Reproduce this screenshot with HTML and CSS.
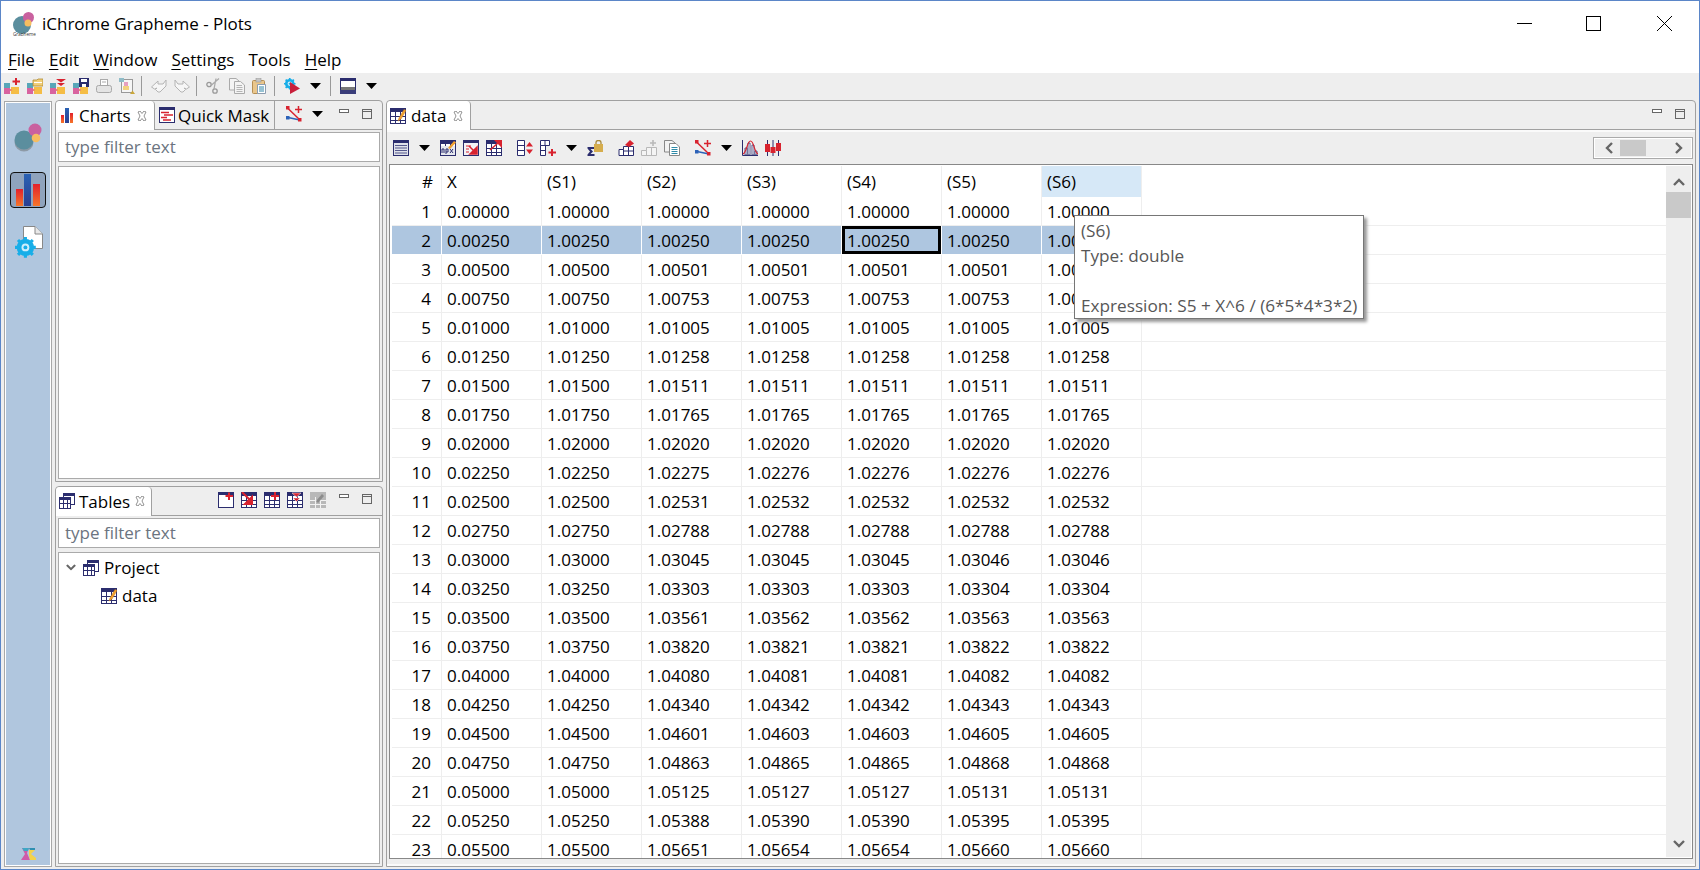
FILE: index.html
```html
<!DOCTYPE html>
<html lang="en">
<head>
    <meta charset="UTF-8">
    <title>iChrome Grapheme - Plots</title>
    <link rel="stylesheet" href="styles.css">
</head>
<body>
    <!-- shared icon sprites -->
    <svg class="sprites" xmlns="http://www.w3.org/2000/svg">
        <defs>
            <linearGradient id="barRed" x1="0" y1="0" x2="0" y2="1"><stop offset="0" stop-color="#e3202c"/><stop offset="1" stop-color="#f6762a"/></linearGradient>
            <linearGradient id="barBlue" x1="0" y1="0" x2="0" y2="1"><stop offset="0" stop-color="#2a62b4"/><stop offset="1" stop-color="#2b3f92"/></linearGradient>
            <g id="blocks">
                <rect x="0" y="5" width="6" height="5" fill="#58a6b8"/>
                <rect x="0" y="10" width="6" height="6" fill="#d8639f"/>
                <rect x="7" y="9" width="8" height="7" fill="#f5bd45"/>
                <rect x="6" y="11" width="2" height="2" fill="#ee8f6a"/>
            </g>
            <g id="gridBase">
                <rect x=".5" y=".5" width="15" height="15" fill="#fff" stroke="#2b2d6e"/>
                <rect x="0" y="0" width="16" height="4" fill="#2b2d6e"/>
                <path d="M0 8.5H16M0 12.5H16M5.5 4V16M10.5 4V16" stroke="#2b2d6e" fill="none"/>
            </g>
            <g id="gear">
                <circle cx="8" cy="8" r="5.2" fill="none" stroke="#18aee8" stroke-width="3"/>
                <path d="M8 0V16M0 8H16M2.3 2.3L13.7 13.7M13.7 2.3L2.3 13.7" stroke="#18aee8" stroke-width="2.4"/>
                <circle cx="8" cy="8" r="4.6" fill="#18aee8"/>
                <circle cx="8" cy="8" r="3" fill="#cfeefb"/>
                <circle cx="8" cy="8" r="1.5" fill="#18aee8"/>
            </g>
            <symbol id="i-new" viewBox="0 0 16 16"><use href="#blocks"/><path d="M12 0V7M8.500 3.500H16" stroke="#d8232f" stroke-width="2"/></symbol>
            <symbol id="i-open" viewBox="0 0 16 16"><use href="#blocks"/><path d="M6 2H10L11 1H16V8H6Z" fill="#f1cf79" stroke="#b08a32" stroke-width=".8"/><rect x="7" y="4" width="8" height="1" fill="#fff"/></symbol>
            <symbol id="i-merge" viewBox="0 0 16 16"><use href="#blocks"/><path d="M6 1H16L11 4.500ZM7 5H15L11 8Z" fill="#d8232f"/></symbol>
            <symbol id="i-save" viewBox="0 0 16 16"><use href="#blocks"/><rect x="6" y="0" width="10" height="9" fill="#2b2d6e"/><rect x="8" y="1" width="6" height="3" fill="#fff"/><rect x="9" y="6" width="4" height="3" fill="#fff"/></symbol>
            <symbol id="i-print" viewBox="0 0 16 16"><rect x="4.500" y="1.500" width="7" height="6" fill="#fff" stroke="#aaa"/><path d="M6 4H10" stroke="#aaa"/><rect x=".5" y="7.500" width="15" height="7" rx="2" fill="#e4e4e4" stroke="#a8a8a8"/></symbol>
            <symbol id="i-preview" viewBox="0 0 16 16"><rect x="2.500" y="1.500" width="11" height="13" fill="#f6f6f6" stroke="#999"/><rect x="0" y="0" width="5" height="4" fill="#8fbcc8"/><rect x="5" y="4" width="4" height="4" fill="#e6a0c0"/><rect x="4" y="8" width="6" height="4" fill="#f2d27e"/><path d="M11 16L13.500 12.500L16 16Z" fill="#c9a63a"/></symbol>
            <symbol id="i-undo" viewBox="0 0 16 16"><path d="M.5 9L7 3V6H12L15 2V8L9 14H7L4.500 11.500L6 10L3.500 11Z" fill="#f6f6f6" stroke="#b4b4b4"/></symbol>
            <symbol id="i-redo" viewBox="0 0 16 16"><path d="M15.500 9L9 3V6H4L1 2V8L7 14H9L11.500 11.500L10 10L12.500 11Z" fill="#f6f6f6" stroke="#b4b4b4"/></symbol>
            <symbol id="i-cut" viewBox="0 0 16 16"><circle cx="3" cy="6.500" r="2.200" fill="none" stroke="#999" stroke-width="1.300"/><circle cx="9" cy="13" r="2.200" fill="none" stroke="#999" stroke-width="1.300"/><path d="M13 .5L5 7.500M10 .5L8 11" stroke="#aaa" stroke-width="1.300"/></symbol>
            <symbol id="i-copy" viewBox="0 0 16 16"><path d="M.5.5H7L10 3V12H.5Z" fill="#f4f4f4" stroke="#aaa"/><path d="M5.500 3.500H11.500L15.500 7V15.500H5.500Z" fill="#f4f4f4" stroke="#aaa"/><path d="M7.500 7.500H13M7.500 9.500H13.500M7.500 11.500H13.500M7.500 13.500H13.500" stroke="#b5b5b5"/></symbol>
            <symbol id="i-paste" viewBox="0 0 16 16"><rect x=".5" y="2.500" width="12" height="13" rx="1" fill="#e9c68c" stroke="#b58f55"/><rect x="4" y="0" width="5" height="4" fill="#c4c4c4" stroke="#999" stroke-width=".6"/><path d="M5.500 6.500H13.500V15.500H5.500Z" fill="#fff" stroke="#8d9db0"/><path d="M7 9H12M7 11H12M7 13H12" stroke="#2e86a8"/></symbol>
            <symbol id="i-run" viewBox="0 0 16 16"><g transform="scale(.72)"><use href="#gear"/></g><path d="M6 4L16 10.500L6 16Z" fill="#c81f3a"/></symbol>
            <symbol id="i-layout" viewBox="0 0 16 16"><rect x=".5" y=".5" width="15" height="15" fill="#fff" stroke="#2b2d6e"/><rect x="0" y="0" width="16" height="3" fill="#2b2d6e"/><rect x="1" y="9" width="14" height="3" fill="#777"/><rect x="0" y="12" width="16" height="4" fill="#3a3d7a"/></symbol>
            <symbol id="i-net" viewBox="0 0 16 16"><path d="M1.500 2L14 14" stroke="#d8232f" stroke-width="1.500"/><path d="M2 11.500L14 14" stroke="#2c62b8" stroke-width="1.500"/><rect x="0" y="0" width="3.500" height="3.500" fill="#d8232f"/><rect x="0" y="10" width="3.500" height="3.500" fill="#2c62b8"/><rect x="12" y="12" width="3.500" height="3.500" fill="#d8232f"/><path d="M12.500 0V7M9 3.500H16" stroke="#d8232f" stroke-width="1.500"/></symbol>
            <symbol id="i-chart" viewBox="0 0 12 16"><rect x="0" y="7" width="3" height="8" fill="url(#barRed)"/><rect x="4" y="0" width="4" height="15" fill="url(#barBlue)"/><rect x="9" y="5" width="3" height="10" fill="url(#barRed)"/></symbol>
            <symbol id="i-mask" viewBox="0 0 16 16"><rect x=".5" y=".5" width="15" height="15" fill="#fff" stroke="#2b2d6e"/><rect x="0" y="0" width="16" height="3" fill="#2b2d6e"/><path d="M2 5.500H10M5 8H14M2 10.500H8M4 13H12" stroke="#d8232f" stroke-width="1.600"/></symbol>
            <symbol id="i-data" viewBox="0 0 16 16"><use href="#gridBase"/><path d="M8 13L9 10L14 1.500L16 2.500L11 11Z" fill="#f2a12f" stroke="#c77a16" stroke-width=".5"/></symbol>
            <symbol id="i-project" viewBox="0 0 16 16"><rect x="4.500" y=".5" width="11" height="11" fill="#fff" stroke="#2b2d6e"/><rect x="4" y="0" width="12" height="3" fill="#2b2d6e"/><rect x=".5" y="4.500" width="11" height="11" fill="#fff" stroke="#2b2d6e"/><rect x="0" y="4" width="12" height="3" fill="#2b2d6e"/><path d="M0 10.500H12M4.500 7V16M8.500 7V16" stroke="#2b2d6e"/></symbol>
            <symbol id="i-view" viewBox="0 0 16 16"><rect x=".5" y=".5" width="15" height="15" fill="#dfe1ea" stroke="#2b2d6e"/><rect x="0" y="0" width="16" height="3" fill="#2b2d6e"/><path d="M2 5.500H14M2 8H14M2 10.500H14M2 13H14" stroke="#55588c" stroke-width="1.200"/></symbol>
            <symbol id="i-expr" viewBox="0 0 16 16"><use href="#gridBase"/><rect x="1" y="6" width="14" height="9" fill="#e6e8ee"/><path d="M2 13V9H4V13M6 9V14M6 9H8V12H6M10 9L13 13M13 9L10 13" stroke="#2b2d6e" fill="none"/><path d="M8 8L14 1L16 2.500L10 9Z" fill="#f2a12f"/></symbol>
            <symbol id="i-import" viewBox="0 0 16 16"><rect x=".5" y=".5" width="15" height="15" fill="#f2f2f6" stroke="#2b2d6e"/><rect x="0" y="0" width="16" height="3" fill="#2b2d6e"/><path d="M3 6H8M3 9H6M3 12H6" stroke="#d8232f"/><path d="M6 6L13 13M14 7V14H7Z" fill="#d8232f" stroke="#d8232f" stroke-width="1.500"/></symbol>
            <symbol id="i-export" viewBox="0 0 16 16"><use href="#gridBase"/><path d="M4 10L12 3M9 0H16V7Z" fill="#d8232f" stroke="#d8232f" stroke-width="1.500"/></symbol>
            <symbol id="i-sort" viewBox="0 0 16 16"><path d="M.5.5H7.500V15.500H.5ZM.5 5.500H7.500M.5 10.500H7.500" fill="#fff" stroke="#2b2d6e"/><path d="M9 6.500L12.500 2L16 6.500ZM9 9.500L12.500 14L16 9.500Z" fill="#d8232f"/></symbol>
            <symbol id="i-addcol" viewBox="0 0 16 16"><path d="M.5.5H9.500V5.500H.5ZM.5 5.500H5.500V15.500H.5ZM.5 10.500H5.500M5 .5V5" fill="#fff" stroke="#2b2d6e"/><path d="M12 9V16M8.500 12.500H16" stroke="#d8232f" stroke-width="2"/></symbol>
            <symbol id="i-sum" viewBox="0 0 16 16"><path d="M.5 7H7.500V9H3.500L6 11.500L3.500 14H7.500V16H.5V14.500L3 11.500L.5 8.500Z" fill="#2b2d6e"/><rect x="7" y="4" width="9" height="8" fill="#d6ad4d"/><path d="M9 4V2.500A2.500 2 0 0 1 14 2.500V4" fill="none" stroke="#a98a3a" stroke-width="1.300"/></symbol>
            <symbol id="i-edittable" viewBox="0 0 16 16"><path d="M1 15.500V9.500H5.500V6.500H15.500V15.500ZM5.500 9.500V15.500M10.500 6.500V15.500M5.500 11H15.500" fill="#fff" stroke="#2b2d6e"/><path d="M7 5L12 0L16 3.500L11 7Z" fill="#d8232f"/></symbol>
            <symbol id="i-addtable" viewBox="0 0 16 16"><path d="M.5 15.500V10.500H5.500V7.500H15.500V15.500ZM5.500 10.500V15.500M10.500 7.500V15.500" fill="#f4f4f4" stroke="#b8b8b8"/><path d="M12 0V6M9 3H15" stroke="#b8b8b8" stroke-width="1.600"/></symbol>
            <symbol id="i-clip" viewBox="0 0 16 16"><path d="M.5.5H8L11 3V12H.5Z" fill="#f2f2f2" stroke="#888"/><path d="M5.500 3.500H12L15.500 7V15.500H5.500Z" fill="#fff" stroke="#888"/><path d="M7.500 7.500H13.500M7.500 9.500H13.500M7.500 11.500H13.500M7.500 13.500H13.500" stroke="#2e8aa8"/></symbol>
            <symbol id="i-dist" viewBox="0 0 16 16"><path d="M.5 0V15.500H16" fill="none" stroke="#2b2d6e"/><path d="M3 15V8H5V15ZM6 15V3H8V15ZM10 15V5H12V15ZM13 15V11H15V15Z" fill="#fff" stroke="#2b2d6e" stroke-width=".8"/><path d="M1 14C5 12 5 1 8.500 1S12 12 16 14" fill="none" stroke="#d8232f" stroke-width="1.200"/></symbol>
            <symbol id="i-candle" viewBox="0 0 16 16"><path d="M2.500 0V16M8 0V16M13.500 0V16" stroke="#2b2d6e"/><rect x="0" y="4" width="5" height="8" fill="#d8232f"/><rect x="5.500" y="7" width="5" height="6" fill="#d8232f"/><rect x="11" y="3" width="5" height="8" fill="#d8232f"/></symbol>
            <symbol id="i-tnew" viewBox="0 0 16 16"><rect x=".5" y=".5" width="15" height="15" fill="#fff" stroke="#2b2d6e"/><rect x="0" y="0" width="16" height="3" fill="#2b2d6e"/><path d="M11 .5V8M7.500 4H15" stroke="#d8232f" stroke-width="2"/></symbol>
            <symbol id="i-tdel" viewBox="0 0 16 16"><use href="#gridBase"/><path d="M1 0L9 8M11 5V12H4Z" fill="#d8232f" stroke="#d8232f" stroke-width="2"/></symbol>
            <symbol id="i-tadd" viewBox="0 0 16 16"><use href="#gridBase"/><path d="M11 0V8M7 4H15" stroke="#d8232f" stroke-width="2"/></symbol>
            <symbol id="i-tmerge" viewBox="0 0 16 16"><use href="#gridBase"/><path d="M5 1H14L9.500 5ZM6 6H13L9.500 9.500Z" fill="#d8232f" stroke="#fff" stroke-width=".5"/></symbol>
            <symbol id="i-tedit" viewBox="0 0 16 16"><rect x="0" y="0" width="16" height="16" fill="#b8b8b8"/><path d="M0 8.500H16M0 12.500H16M5.500 5V16M10.500 5V16" stroke="#f2f2f2"/><path d="M6 9L12 2L14 4L8 11Z" fill="#8c8c8c"/></symbol>
            <symbol id="i-drop" viewBox="0 0 11 6"><path d="M0 0H11L5.500 6Z" fill="#000"/></symbol>
            <symbol id="i-min" viewBox="0 0 10 10"><rect x=".5" y=".5" width="9" height="3" fill="#fff" stroke="#666"/></symbol>
            <symbol id="i-max" viewBox="0 0 10 10"><rect x=".5" y=".5" width="9" height="9" fill="none" stroke="#666"/><path d="M0 2.500H10" stroke="#666"/></symbol>
            <symbol id="i-close" viewBox="0 0 10 10"><path d="M1 1L3 0L5 2.500L7 0L9 1L7 5L9 9L7 10L5 7.500L3 10L1 9L3 5Z" fill="#fff" stroke="#777" stroke-width=".8"/></symbol>
            <symbol id="i-chev" viewBox="0 0 12 8"><path d="M1 7L6 2L11 7" fill="none" stroke="#666" stroke-width="2.400"/></symbol>
        </defs>
    </svg>

    <div class="window">
        <div class="titlebar">
            <svg class="app-logo" viewBox="0 0 24 24">
                <circle cx="10" cy="13" r="9" fill="#5b8e9e"/>
                <circle cx="16.500" cy="5.500" r="5.500" fill="#c9619f"/>
                <circle cx="16" cy="11" r="3.500" fill="#f6bd60"/>
                <text x="1" y="23.500" class="logo-text">Grapheme</text>
            </svg>
            <span class="app-title">iChrome Grapheme - Plots</span>
            <svg class="win-btn min" viewBox="0 0 15 15"><path d="M0 7.500H15" stroke="#000"/></svg>
            <svg class="win-btn max" viewBox="0 0 15 15"><rect x=".5" y=".5" width="14" height="14" fill="none" stroke="#000"/></svg>
            <svg class="win-btn close" viewBox="0 0 15 15"><path d="M0 0L15 15M15 0L0 15" stroke="#000"/></svg>
        </div>

        <div class="menubar">
            <span class="menu-item"><u>F</u>ile</span>
            <span class="menu-item"><u>E</u>dit</span>
            <span class="menu-item"><u>W</u>indow</span>
            <span class="menu-item"><u>S</u>ettings</span>
            <span class="menu-item">Tools</span>
            <span class="menu-item"><u>H</u>elp</span>
        </div>

        <div class="toolbar">
            <svg class="ic"><use href="#i-new"/></svg>
            <svg class="ic"><use href="#i-open"/></svg>
            <svg class="ic"><use href="#i-merge"/></svg>
            <svg class="ic"><use href="#i-save"/></svg>
            <svg class="ic"><use href="#i-print"/></svg>
            <svg class="ic"><use href="#i-preview"/></svg>
            <span class="sep"></span>
            <svg class="ic"><use href="#i-undo"/></svg>
            <svg class="ic"><use href="#i-redo"/></svg>
            <span class="sep"></span>
            <svg class="ic"><use href="#i-cut"/></svg>
            <svg class="ic"><use href="#i-copy"/></svg>
            <svg class="ic"><use href="#i-paste"/></svg>
            <span class="sep"></span>
            <svg class="ic"><use href="#i-run"/></svg>
            <svg class="drop"><use href="#i-drop"/></svg>
            <span class="sep"></span>
            <svg class="ic"><use href="#i-layout"/></svg>
            <svg class="drop"><use href="#i-drop"/></svg>
        </div>

        <div class="workbench">
            <div class="perspectives">
                <svg class="persp-logo" viewBox="0 0 30 30">
                    <circle cx="10" cy="19" r="9.500" fill="#8d9aa6"/>
                    <circle cx="10" cy="17" r="9.500" fill="#5b8e9e"/>
                    <circle cx="21" cy="7" r="6.500" fill="#c9619f"/>
                    <circle cx="22" cy="15" r="4.300" fill="#f6bd60"/>
                </svg>
                <div class="persp-active">
                    <svg class="persp-bars" viewBox="0 0 24 32">
                        <rect x="0" y="15" width="7" height="17" fill="url(#barRed)"/>
                        <rect x="8" y="0" width="7" height="32" fill="url(#barBlue)"/>
                        <rect x="17" y="10" width="7" height="22" fill="url(#barRed)"/>
                    </svg>
                </div>
                <svg class="persp-settings" viewBox="0 0 28 32">
                    <path d="M8.500 .5H20L27.500 8V22.500H8.500Z" fill="#fff" stroke="#888"/>
                    <path d="M20 .5V8H27.500" fill="#e8e8e8" stroke="#888"/>
                    <g transform="translate(0 11) scale(1.300)"><use href="#gear"/></g>
                </svg>
                <svg class="persp-mark" viewBox="0 0 15 12">
                    <path d="M0 12L4 6L1 0H8L6 5L9 12Z" fill="#cf5aa8"/>
                    <path d="M1 0H8L7 3H3Z" fill="#3fa7c4"/>
                    <path d="M8 2H14L10 6L15 10V12H9L8 7Z" fill="#f4d24a"/>
                    <path d="M8 0H14V2H9Z" fill="#2f8fb0"/>
                </svg>
            </div>

            <div class="left-column">
                <div class="panel">
                    <div class="tabstrip">
                        <div class="tab active charts-tab">
                            <svg class="tab-chart"><use href="#i-chart"/></svg>
                            <span>Charts</span>
                            <svg class="tab-close"><use href="#i-close"/></svg>
                        </div>
                        <div class="tab mask-tab">
                            <svg class="ic"><use href="#i-mask"/></svg>
                            <span>Quick Mask</span>
                        </div>
                        <div class="view-tools">
                            <svg class="ic"><use href="#i-net"/></svg>
                            <svg class="drop"><use href="#i-drop"/></svg>
                            <svg class="win-mini"><use href="#i-min"/></svg>
                            <svg class="win-mini"><use href="#i-max"/></svg>
                        </div>
                    </div>
                    <div class="panel-body">
                        <div class="filter">type filter text</div>
                        <div class="list-box"></div>
                    </div>
                </div>

                <div class="panel">
                    <div class="tabstrip">
                        <div class="tab active tables-tab">
                            <svg class="ic"><use href="#i-project"/></svg>
                            <span>Tables</span>
                            <svg class="tab-close"><use href="#i-close"/></svg>
                        </div>
                        <div class="view-tools">
                            <svg class="ic"><use href="#i-tnew"/></svg>
                            <svg class="ic"><use href="#i-tdel"/></svg>
                            <svg class="ic"><use href="#i-tadd"/></svg>
                            <svg class="ic"><use href="#i-tmerge"/></svg>
                            <svg class="ic"><use href="#i-tedit"/></svg>
                            <svg class="win-mini"><use href="#i-min"/></svg>
                            <svg class="win-mini"><use href="#i-max"/></svg>
                        </div>
                    </div>
                    <div class="panel-body">
                        <div class="filter">type filter text</div>
                        <div class="list-box tree">
                            <div class="tree-row">
                                <svg class="twist" viewBox="0 0 12 8"><use href="#i-chev" transform="rotate(180 6 4)"/></svg>
                                <svg class="ic"><use href="#i-project"/></svg>
                                <span>Project</span>
                            </div>
                            <div class="tree-row child">
                                <svg class="ic"><use href="#i-data"/></svg>
                                <span>data</span>
                            </div>
                        </div>
                    </div>
                </div>
            </div>

            <div class="panel data-panel">
                <div class="tabstrip">
                    <div class="tab active data-tab">
                        <svg class="ic"><use href="#i-data"/></svg>
                        <span>data</span>
                        <svg class="tab-close"><use href="#i-close"/></svg>
                    </div>
                    <div class="view-tools">
                        <svg class="win-mini"><use href="#i-min"/></svg>
                        <svg class="win-mini"><use href="#i-max"/></svg>
                    </div>
                </div>
                <div class="data-body">
                    <div class="data-toolbar">
                        <svg class="ic"><use href="#i-view"/></svg>
                        <svg class="drop"><use href="#i-drop"/></svg>
                        <svg class="ic"><use href="#i-expr"/></svg>
                        <svg class="ic"><use href="#i-import"/></svg>
                        <svg class="ic"><use href="#i-export"/></svg>
                        <svg class="ic wide"><use href="#i-sort"/></svg>
                        <svg class="ic"><use href="#i-addcol"/></svg>
                        <svg class="drop"><use href="#i-drop"/></svg>
                        <svg class="ic"><use href="#i-sum"/></svg>
                        <svg class="ic wide"><use href="#i-edittable"/></svg>
                        <svg class="ic"><use href="#i-addtable"/></svg>
                        <svg class="ic"><use href="#i-clip"/></svg>
                        <svg class="ic wide"><use href="#i-net"/></svg>
                        <svg class="drop"><use href="#i-drop"/></svg>
                        <svg class="ic"><use href="#i-dist"/></svg>
                        <svg class="ic"><use href="#i-candle"/></svg>
                        <div class="hscroll">
                            <svg class="hscroll-arrow"><use href="#i-chev" transform="rotate(-90 6 6)"/></svg>
                            <div class="hscroll-thumb"></div>
                            <svg class="hscroll-arrow"><use href="#i-chev" transform="rotate(90 6 6)"/></svg>
                        </div>
                    </div>

                    <div class="table-box">
                        <div class="table-clip">
                            <table class="grid">
                                <thead>
                                    <tr><th class="num">#</th><th>X</th><th>(S1)</th><th>(S2)</th><th>(S3)</th><th>(S4)</th><th>(S5)</th><th class="hot">(S6)</th><th class="rest"></th></tr>
                                </thead>
                                <tbody>
                                    <tr><td class="num">1</td><td>0.00000</td><td>1.00000</td><td>1.00000</td><td>1.00000</td><td>1.00000</td><td>1.00000</td><td>1.00000</td><td class="rest"></td></tr>
                                    <tr class="selected"><td class="num">2</td><td>0.00250</td><td>1.00250</td><td>1.00250</td><td>1.00250</td><td class="focus">1.00250</td><td>1.00250</td><td>1.00250</td><td class="rest"></td></tr>
                                    <tr><td class="num">3</td><td>0.00500</td><td>1.00500</td><td>1.00501</td><td>1.00501</td><td>1.00501</td><td>1.00501</td><td>1.00501</td><td class="rest"></td></tr>
                                    <tr><td class="num">4</td><td>0.00750</td><td>1.00750</td><td>1.00753</td><td>1.00753</td><td>1.00753</td><td>1.00753</td><td>1.00753</td><td class="rest"></td></tr>
                                    <tr><td class="num">5</td><td>0.01000</td><td>1.01000</td><td>1.01005</td><td>1.01005</td><td>1.01005</td><td>1.01005</td><td>1.01005</td><td class="rest"></td></tr>
                                    <tr><td class="num">6</td><td>0.01250</td><td>1.01250</td><td>1.01258</td><td>1.01258</td><td>1.01258</td><td>1.01258</td><td>1.01258</td><td class="rest"></td></tr>
                                    <tr><td class="num">7</td><td>0.01500</td><td>1.01500</td><td>1.01511</td><td>1.01511</td><td>1.01511</td><td>1.01511</td><td>1.01511</td><td class="rest"></td></tr>
                                    <tr><td class="num">8</td><td>0.01750</td><td>1.01750</td><td>1.01765</td><td>1.01765</td><td>1.01765</td><td>1.01765</td><td>1.01765</td><td class="rest"></td></tr>
                                    <tr><td class="num">9</td><td>0.02000</td><td>1.02000</td><td>1.02020</td><td>1.02020</td><td>1.02020</td><td>1.02020</td><td>1.02020</td><td class="rest"></td></tr>
                                    <tr><td class="num">10</td><td>0.02250</td><td>1.02250</td><td>1.02275</td><td>1.02276</td><td>1.02276</td><td>1.02276</td><td>1.02276</td><td class="rest"></td></tr>
                                    <tr><td class="num">11</td><td>0.02500</td><td>1.02500</td><td>1.02531</td><td>1.02532</td><td>1.02532</td><td>1.02532</td><td>1.02532</td><td class="rest"></td></tr>
                                    <tr><td class="num">12</td><td>0.02750</td><td>1.02750</td><td>1.02788</td><td>1.02788</td><td>1.02788</td><td>1.02788</td><td>1.02788</td><td class="rest"></td></tr>
                                    <tr><td class="num">13</td><td>0.03000</td><td>1.03000</td><td>1.03045</td><td>1.03045</td><td>1.03045</td><td>1.03046</td><td>1.03046</td><td class="rest"></td></tr>
                                    <tr><td class="num">14</td><td>0.03250</td><td>1.03250</td><td>1.03303</td><td>1.03303</td><td>1.03303</td><td>1.03304</td><td>1.03304</td><td class="rest"></td></tr>
                                    <tr><td class="num">15</td><td>0.03500</td><td>1.03500</td><td>1.03561</td><td>1.03562</td><td>1.03562</td><td>1.03563</td><td>1.03563</td><td class="rest"></td></tr>
                                    <tr><td class="num">16</td><td>0.03750</td><td>1.03750</td><td>1.03820</td><td>1.03821</td><td>1.03821</td><td>1.03822</td><td>1.03822</td><td class="rest"></td></tr>
                                    <tr><td class="num">17</td><td>0.04000</td><td>1.04000</td><td>1.04080</td><td>1.04081</td><td>1.04081</td><td>1.04082</td><td>1.04082</td><td class="rest"></td></tr>
                                    <tr><td class="num">18</td><td>0.04250</td><td>1.04250</td><td>1.04340</td><td>1.04342</td><td>1.04342</td><td>1.04343</td><td>1.04343</td><td class="rest"></td></tr>
                                    <tr><td class="num">19</td><td>0.04500</td><td>1.04500</td><td>1.04601</td><td>1.04603</td><td>1.04603</td><td>1.04605</td><td>1.04605</td><td class="rest"></td></tr>
                                    <tr><td class="num">20</td><td>0.04750</td><td>1.04750</td><td>1.04863</td><td>1.04865</td><td>1.04865</td><td>1.04868</td><td>1.04868</td><td class="rest"></td></tr>
                                    <tr><td class="num">21</td><td>0.05000</td><td>1.05000</td><td>1.05125</td><td>1.05127</td><td>1.05127</td><td>1.05131</td><td>1.05131</td><td class="rest"></td></tr>
                                    <tr><td class="num">22</td><td>0.05250</td><td>1.05250</td><td>1.05388</td><td>1.05390</td><td>1.05390</td><td>1.05395</td><td>1.05395</td><td class="rest"></td></tr>
                                    <tr><td class="num">23</td><td>0.05500</td><td>1.05500</td><td>1.05651</td><td>1.05654</td><td>1.05654</td><td>1.05660</td><td>1.05660</td><td class="rest"></td></tr>
                                </tbody>
                            </table>
                        </div>
                        <div class="vscroll">
                            <svg class="vscroll-arrow"><use href="#i-chev"/></svg>
                            <div class="vscroll-thumb"></div>
                            <svg class="vscroll-arrow down"><use href="#i-chev"/></svg>
                        </div>
                    </div>
                </div>
            </div>
        </div>
    </div>

    <div class="tooltip">
        <div>(S6)</div>
        <div>Type: double</div>
        <div>&nbsp;</div>
        <div>Expression: S5 + X^6 / (6*5*4*3*2)</div>
    </div>
</body>
</html>
```

FILE: styles.css
```css
html, body {
    margin: 0;
    height: 100%;
    overflow: hidden;
}

body {
    position: relative;
    font-family: "Open Sans", sans-serif;
    font-size: 17px;
    color: #000;
    background: #fff;
}

.sprites {
    position: absolute;
    width: 0;
    height: 0;
}

svg {
    display: block;
    flex: none;
    overflow: hidden;
}

.window {
    box-sizing: border-box;
    width: 1700px;
    height: 870px;
    border: 1px solid #5b86c8;
    display: flex;
    flex-direction: column;
}

/* title bar */
.titlebar {
    height: 45px;
    flex: none;
    display: flex;
    align-items: center;
    padding-left: 11px;
    background: #fff;
}

.app-logo {
    width: 24px;
    height: 24px;
}

.logo-text {
    font-size: 4.6px;
    fill: #333;
}

.app-title {
    margin-left: 6px;
    flex: 1;
}

.win-btn {
    width: 15px;
    height: 15px;
}

.win-btn.max {
    margin-left: 54px;
}

.win-btn.close {
    margin-left: 56px;
    margin-right: 27px;
}

/* menu */
.menubar {
    height: 27px;
    flex: none;
    display: flex;
    align-items: center;
    background: #fff;
}

.menu-item {
    padding: 0 7px;
}

.menu-item u {
    text-underline-offset: 3px;
}

/* main toolbar */
.toolbar {
    height: 25px;
    flex: none;
    display: flex;
    align-items: center;
    gap: 7px;
    padding-left: 3px;
    background: #eee;
}

.ic {
    width: 16px;
    height: 16px;
}

.drop {
    width: 11px;
    height: 6px;
    margin: 0 3px;
}

.sep {
    width: 1px;
    height: 20px;
    background: #999;
    margin: 0 2px 0 -1px;
}

/* workbench */
.workbench {
    flex: 1;
    min-height: 0;
    display: flex;
    gap: 3px;
    padding: 2px 3px 2px 3px;
    background: #eee;
}

.perspectives {
    position: relative;
    box-sizing: border-box;
    width: 48px;
    margin-top: 1px;
    border: 1px solid #a8a8a8;
    outline: 1px solid #fff;
    outline-offset: -2px;
    background: #b0c6de;
    display: flex;
    flex-direction: column;
    align-items: center;
}

.persp-logo {
    width: 30px;
    height: 30px;
    margin-top: 21px;
    margin-left: 2px;
}

.persp-active {
    box-sizing: border-box;
    width: 36px;
    height: 36px;
    margin-top: 19px;
    border: 1px solid #111;
    border-radius: 4px;
    background: #8fa3bd;
    display: flex;
    align-items: flex-end;
    justify-content: center;
    padding-bottom: 1px;
}

.persp-bars {
    width: 24px;
    height: 32px;
}

.persp-settings {
    width: 28px;
    height: 32px;
    margin-top: 18px;
    margin-left: 2px;
}

.persp-mark {
    width: 15px;
    height: 12px;
    margin-top: auto;
    margin-bottom: 6px;
}

.left-column {
    width: 328px;
    flex: none;
    display: flex;
    flex-direction: column;
    gap: 4px;
}

.panel {
    flex: 1;
    min-height: 0;
    min-width: 0;
    display: flex;
    flex-direction: column;
    border: 1px solid #a0a0a0;
    border-radius: 4px 4px 0 0;
    background: #eee;
}

.tabstrip {
    height: 29px;
    flex: none;
    box-sizing: border-box;
    display: flex;
    border-bottom: 1px solid #a0a0a0;
}

.tab {
    box-sizing: border-box;
    height: 29px;
    display: flex;
    align-items: center;
    white-space: nowrap;
}

.tab.active {
    background: #fff;
    border-right: 1px solid #a0a0a0;
    border-radius: 4px 4px 0 0;
}

.charts-tab {
    width: 99px;
    padding-left: 5px;
}

.tab-chart {
    width: 12px;
    height: 16px;
    margin-right: 6px;
}

.tab-close {
    width: 10px;
    height: 10px;
    margin-left: auto;
    margin-right: 7px;
}

.mask-tab {
    width: 120px;
    padding-left: 4px;
    gap: 3px;
    height: 28px;
    border-right: 1px solid #a0a0a0;
}

.tables-tab {
    width: 96px;
    padding-left: 3px;
    gap: 4px;
}

.tables-tab .tab-close {
    margin-right: 6px;
}

.data-tab {
    width: 84px;
    padding-left: 3px;
    gap: 5px;
}

.view-tools {
    margin-left: auto;
    display: flex;
    align-items: center;
    height: 26px;
    gap: 7px;
    padding-right: 10px;
}

.view-tools .drop {
    margin: 0 3px 0 3px;
}

.win-mini {
    width: 10px;
    height: 10px;
    margin-left: 6px;
    margin-top: -1px;
}

.panel-body {
    flex: 1;
    min-height: 0;
    display: flex;
    flex-direction: column;
    padding: 2px;
}

.filter {
    box-sizing: border-box;
    height: 30px;
    flex: none;
    border: 1px solid #aaa;
    background: #fff;
    color: #6b7480;
    line-height: 27px;
    padding-left: 6px;
}

.list-box {
    flex: 1;
    margin-top: 4px;
    border: 1px solid #aaa;
    background: #fff;
}

.tree {
    padding-top: 1px;
}

.tree-row {
    height: 28px;
    display: flex;
    align-items: center;
    padding-left: 7px;
}

.tree-row .ic {
    margin-left: 7px;
    margin-right: 5px;
}

.tree-row.child {
    padding-left: 35px;
}

.twist {
    width: 10px;
    height: 7px;
}

/* data editor */
.data-body {
    flex: 1;
    min-height: 0;
    display: flex;
    flex-direction: column;
    padding: 0 2px 5px;
    border-top: 2px solid #fafafa;
    border-bottom: 2px solid #fafafa;
}

.data-toolbar {
    height: 32px;
    flex: none;
    display: flex;
    align-items: center;
    gap: 7px;
    padding-left: 4px;
}

.data-toolbar .wide {
    margin-left: 8px;
}

.hscroll {
    box-sizing: border-box;
    margin-left: auto;
    width: 100px;
    height: 22px;
    border: 1px solid #aaa;
    background: #eee;
    outline: 1px solid #fff;
    outline-offset: -2px;
    display: flex;
    align-items: center;
    justify-content: space-between;
    padding: 0 7px 0 9px;
}

.hscroll-arrow {
    width: 12px;
    height: 12px;
}

.hscroll-thumb {
    width: 26px;
    height: 16px;
    background: #c9c9c9;
    margin-left: -3px;
    margin-right: 19px;
}

.table-box {
    flex: 1;
    min-height: 0;
    display: flex;
    border: 1px solid #888;
    background: #fff;
}

.table-clip {
    flex: 1;
    min-width: 0;
    overflow: hidden;
    padding: 1px 0 0 2px;
}

.grid {
    border-collapse: separate;
    border-spacing: 0;
    table-layout: fixed;
    width: 1274px;
}

.grid th {
    height: 31px;
    box-sizing: border-box;
    padding: 0 0 0 5px;
    font-weight: normal;
    text-align: left;
    width: 100px;
    border-right: 1px solid #eee;
}

.grid th.num {
    width: 50px;
    text-align: right;
    padding: 0 8px 0 0;
}

.grid th.hot {
    background: #d6e8f7;
}

.grid th.rest,
.grid td.rest {
    width: auto;
    border-right: 0;
}

.grid td {
    height: 29px;
    box-sizing: border-box;
    padding: 0 0 0 5px;
    border-right: 1px solid #eee;
    border-bottom: 1px solid #eee;
    white-space: nowrap;
}

.grid td.num {
    text-align: right;
    padding: 0 10px 0 0;
}

.grid .selected td {
    background: #aec6e0;
    border-right-color: #fff;
    border-bottom-color: #fff;
}

.grid .selected td.rest {
    background: #fff;
    border-bottom-color: #eee;
}

.grid .selected td.focus {
    box-shadow: inset 0 0 0 3px #000;
}

.vscroll {
    width: 25px;
    flex: none;
    margin: 1px 1px 1px 0;
    background: #eee;
    display: flex;
    flex-direction: column;
    align-items: center;
}

.vscroll-arrow {
    width: 12px;
    height: 8px;
    margin-top: 12px;
    flex: none;
}

.vscroll-arrow.down {
    margin: auto 0 9px;
    transform: rotate(180deg);
}

.vscroll-thumb {
    width: 100%;
    height: 26px;
    margin-top: 6px;
    margin-right: 1px;
    background: #c9c9c9;
}

.tooltip {
    position: absolute;
    left: 1074px;
    top: 215px;
    box-sizing: border-box;
    width: 290px;
    height: 104px;
    padding: 2px 6px;
    border: 1px solid #767676;
    background: #fff;
    color: #575757;
    font-size: 17.2px;
    line-height: 25px;
    white-space: nowrap;
    box-shadow: 3px 3px 3px #999;
}
```
